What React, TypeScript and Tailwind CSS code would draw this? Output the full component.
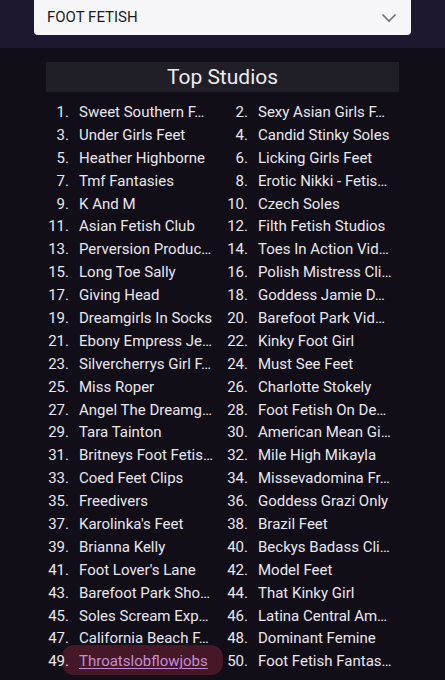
import React from 'react';

// names as they show in the list (long ones are cut off by the app)
const studios: string[] = [
  'Sweet Southern F…',
  'Sexy Asian Girls F…',
  'Under Girls Feet',
  'Candid Stinky Soles',
  'Heather Highborne',
  'Licking Girls Feet',
  'Tmf Fantasies',
  'Erotic Nikki - Fetis…',
  'K And M',
  'Czech Soles',
  'Asian Fetish Club',
  'Filth Fetish Studios',
  'Perversion Produc…',
  'Toes In Action Vid…',
  'Long Toe Sally',
  'Polish Mistress Cli…',
  'Giving Head',
  'Goddess Jamie D…',
  'Dreamgirls In Socks',
  'Barefoot Park Vid…',
  'Ebony Empress Je…',
  'Kinky Foot Girl',
  'Silvercherrys Girl F…',
  'Must See Feet',
  'Miss Roper',
  'Charlotte Stokely',
  'Angel The Dreamg…',
  'Foot Fetish On De…',
  'Tara Tainton',
  'American Mean Gi…',
  'Britneys Foot Fetis…',
  'Mile High Mikayla',
  'Coed Feet Clips',
  'Missevadomina Fr…',
  'Freedivers',
  'Goddess Grazi Only',
  "Karolinka's Feet",
  'Brazil Feet',
  'Brianna Kelly',
  'Beckys Badass Cli…',
  "Foot Lover's Lane",
  'Model Feet',
  'Barefoot Park Sho…',
  'That Kinky Girl',
  'Soles Scream Exp…',
  'Latina Central Am…',
  'California Beach F…',
  'Dominant Femine',
  'Throatslobflowjobs',
  'Foot Fetish Fantas…',
];

const App: React.FC = () => {
  return (
    <div
      className="w-[445px] h-[680px] overflow-hidden bg-[#110e18] text-[#e9e7ee]"
      style={{ fontFamily: 'Roboto, "Noto Sans", sans-serif' }}
    >
      {/* category selector */}
      <div className="h-[48px] bg-[#1d1830] px-[34px]">
        <div className="h-[35px] bg-[#f6f6f8] rounded-b-[4px] flex items-center justify-between pl-[13px] pr-[14px]">
          <span className="text-[15px] text-[#1b1b1f]">FOOT FETISH</span>
          <svg width="16" height="10" viewBox="0 0 16 10" fill="none">
            <path d="M1.5 1.5 L8 8 L14.5 1.5" stroke="#707075" strokeWidth="1.6" />
          </svg>
        </div>
      </div>

      <div className="pt-[14px]">
        <div className="ml-[46px] w-[353px] h-[30px] bg-[#201e27] flex items-center justify-center">
          <span className="text-[21px] text-[#ecebf0] leading-none">Top Studios</span>
        </div>

        <div className="ml-[45px] mt-[9px] w-[358px] grid grid-cols-2">
          {studios.map((name, i) => {
            const isLink = i === 48;
            return (
              <div key={i} className="relative h-[22.9px] flex items-center text-[15px] leading-none whitespace-nowrap">
                {isLink && (
                  <span className="absolute left-[17px] top-[-5px] w-[161px] h-[30px] rounded-[12px] bg-[#4a1a29] opacity-90" />
                )}
                <span className="relative w-[24px] text-right shrink-0">{i + 1}.</span>
                <span
                  className={
                    isLink
                      ? 'relative ml-[10px] underline underline-offset-2 decoration-1 text-[#c68cd6]'
                      : 'relative ml-[10px]'
                  }
                >
                  {name}
                </span>
              </div>
            );
          })}
        </div>
      </div>
    </div>
  );
};

export default App;
